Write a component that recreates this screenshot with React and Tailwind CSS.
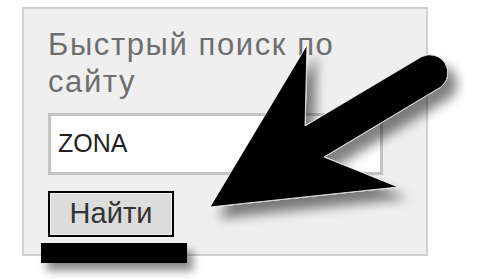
import React from 'react';

const Arrow = () => (
  <svg
    className="absolute left-0 top-0 pointer-events-none"
    width="488"
    height="279"
    viewBox="0 0 488 279"
  >
    <defs>
      <filter id="shadow" x="-20%" y="-20%" width="150%" height="150%">
        <feGaussianBlur in="SourceAlpha" stdDeviation="6" />
        <feOffset dx="9" dy="11" result="blur" />
        <feComponentTransfer>
          <feFuncA type="linear" slope="0.5" />
        </feComponentTransfer>
        <feMerge>
          <feMergeNode />
          <feMergeNode in="SourceGraphic" />
        </feMerge>
      </filter>
    </defs>
    <path
      d="M210,207 L307,45 L305,126 L421.8,56.6 A18,18 0 0 1 440.2,87.4 L324,157 L398,187 Z"
      fill="#000"
      stroke="#fff"
      strokeWidth="0.8"
      filter="url(#shadow)"
    />
  </svg>
);

export default function App() {
  return (
    <div
      className="relative w-[488px] h-[279px] bg-white overflow-hidden"
      style={{ fontFamily: '"Liberation Sans", Arial, sans-serif' }}
    >
      <div className="absolute left-[22px] top-[7px] w-[406px] h-[249px] border-2 border-[#d0d0d0] bg-[#efefef] pl-[24px] pt-[17px]">
        <div className="text-[31px] leading-[37px] tracking-[1.6px] text-[#6e6e6e] w-[310px]">
          Быстрый поиск по сайту
        </div>
        <div className="mt-[13px] w-[335px] h-[62px] border-[3px] border-[#c4c4c4] bg-white flex items-center pl-[7px]">
          <span className="text-[25px] text-[#222]">ZONA</span>
        </div>
        <div className="mt-[16px] w-[126px] h-[46px] border-2 border-black bg-[#dcdcdc] flex items-center justify-center">
          <div className="w-full h-full border border-[#f0f0f0] flex items-center justify-center text-[29px] text-[#333]">
            Найти
          </div>
        </div>
      </div>
      <div className="absolute left-[41px] top-[243px] w-[146px] h-[20px] bg-black shadow-[6px_8px_8px_rgba(0,0,0,0.45)]" />
      <Arrow />
    </div>
  );
}
